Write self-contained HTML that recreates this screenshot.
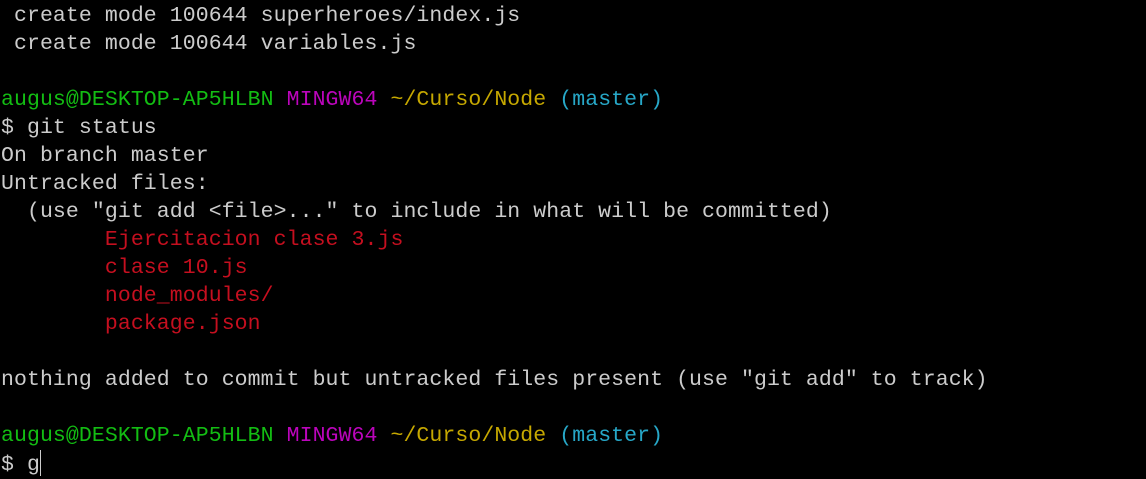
<!DOCTYPE html>
<html><head><meta charset="utf-8"><style>
html,body{margin:0;padding:0;background:#000;width:1146px;height:478px;overflow:hidden}
pre{margin:0;position:absolute;left:1px;top:2px;font-family:"Liberation Mono",monospace;font-size:21.5px;letter-spacing:0.08px;line-height:28px;color:#cccccc}
.g{color:#13bd13}.m{color:#bc05bc}.y{color:#c6a800}.c{color:#27a8c8}.r{color:#c50f1f}
.cur{display:inline-block;width:1px;height:26px;background:#ccc;vertical-align:-6px}
</style></head><body><pre> create mode 100644 superheroes/index.js
 create mode 100644 variables.js

<span class="g">augus@DESKTOP-AP5HLBN</span> <span class="m">MINGW64</span> <span class="y">~/Curso/Node</span> <span class="c">(master)</span>
$ git status
On branch master
Untracked files:
  (use "git add &lt;file&gt;..." to include in what will be committed)
        <span class="r">Ejercitacion clase 3.js</span>
        <span class="r">clase 10.js</span>
        <span class="r">node_modules/</span>
        <span class="r">package.json</span>

nothing added to commit but untracked files present (use "git add" to track)

<span class="g">augus@DESKTOP-AP5HLBN</span> <span class="m">MINGW64</span> <span class="y">~/Curso/Node</span> <span class="c">(master)</span>
$ g<span class="cur"></span></pre></body></html>
